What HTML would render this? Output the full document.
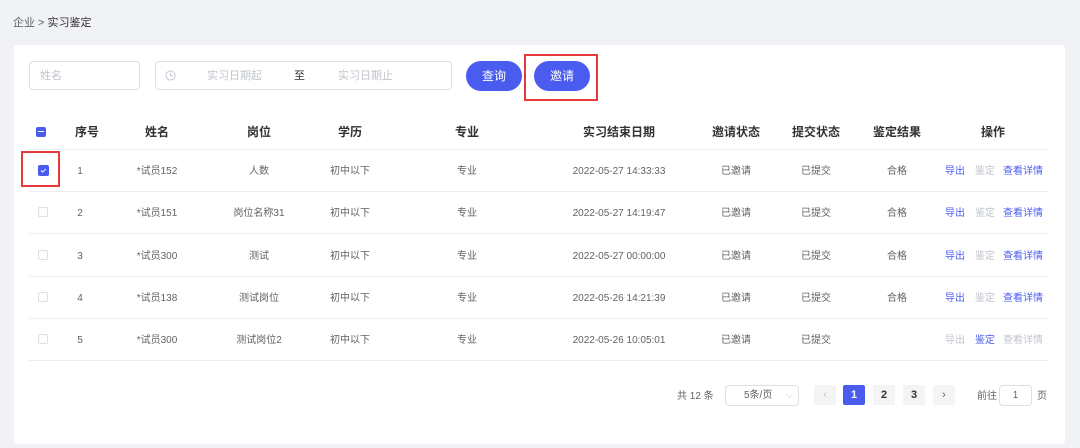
<!DOCTYPE html>
<html><head><meta charset="utf-8"><style>
*{box-sizing:border-box;margin:0;padding:0}
body{width:1080px;height:448px;background:#f0f2f5;font-family:"Liberation Sans","Noto Sans CJK SC",sans-serif;position:relative;overflow:hidden;color:#606266}
.a{position:absolute;line-height:12px}
.card{left:14px;top:45px;width:1051px;height:399px;background:#fff;border-radius:3px}
.inp{border:1px solid #dcdfe6;border-radius:4px;background:#fff}
.ph{color:#c0c4cc;font-size:11px}
.btn{background:#4a5cf0;color:#fff;font-size:12px;border-radius:15px;text-align:center;line-height:30px}
.hd{font-size:12px;font-weight:bold;color:#303133;top:126px;transform:translateX(-50%);white-space:nowrap}
.c{font-size:10px;color:#606266;transform:translate(-50%,2px);white-space:nowrap}
.line{left:29px;width:1019px;height:1px;background:#ebeef5}
.cb{width:10px;height:10px;border:1px solid #dcdfe6;border-radius:2px;background:#fff}
.blue{color:#4a5cf0}.gray{color:#c0c4cc}
.pg{width:22px;height:20px;background:#f4f4f5;border-radius:2px;font-size:11px;font-weight:bold;color:#303133;text-align:center;line-height:20px;top:385px}
</style></head><body>
<div class="a" style="left:13px;top:17px;font-size:11px;color:#606266">企业 &gt; <span style="color:#303133">实习鉴定</span></div>
<div class="a card"></div>
<div class="a inp" style="left:29px;top:61px;width:111px;height:29px"><span class="a ph" style="left:10px;top:8px">姓名</span></div>
<div class="a inp" style="left:155px;top:61px;width:297px;height:29px">
<svg class="a" style="left:9px;top:8px" width="11" height="11" viewBox="0 0 12 12"><circle cx="6" cy="6" r="5" fill="none" stroke="#c0c4cc" stroke-width="1"/><path d="M6 3v3h2.5" fill="none" stroke="#c0c4cc"/></svg>
<span class="a ph" style="left:51px;top:8px">实习日期起</span>
<span class="a" style="left:138px;top:8px;font-size:11px;color:#303133">至</span>
<span class="a ph" style="left:182px;top:8px">实习日期止</span></div>
<div class="a btn" style="left:466px;top:61px;width:56px;height:30px;line-height:30px">查询</div>
<div class="a btn" style="left:534px;top:61px;width:56px;height:30px;line-height:30px">邀请</div>
<div class="a" style="left:524px;top:54px;width:74px;height:47px;border:2px solid #e83a3a"></div>

<div class="a" style="left:36px;top:127px;width:10px;height:10px;background:#4a5cf0;border-radius:2px"><div class="a" style="left:2px;top:4px;width:6px;height:1px;background:#fff"></div></div>
<div class="a hd" style="left:87px">序号</div>
<div class="a hd" style="left:157px">姓名</div>
<div class="a hd" style="left:259px">岗位</div>
<div class="a hd" style="left:350px">学历</div>
<div class="a hd" style="left:467px">专业</div>
<div class="a hd" style="left:619px">实习结束日期</div>
<div class="a hd" style="left:736px">邀请状态</div>
<div class="a hd" style="left:816px">提交状态</div>
<div class="a hd" style="left:897px">鉴定结果</div>
<div class="a hd" style="left:993px">操作</div>
<div class="a line" style="top:149px"></div>
<div class="a line" style="top:191px"></div>
<div class="a line" style="top:233px"></div>
<div class="a line" style="top:276px"></div>
<div class="a line" style="top:318px"></div>
<div class="a line" style="top:360px"></div>

<div class="a" style="left:38px;top:165px;width:11px;height:11px;background:#4a5cf0;border-radius:2px"><svg class="a" style="left:2px;top:2px" width="7" height="7" viewBox="0 0 7 7"><path d="M1 3.5l1.6 1.6L6 1.8" fill="none" stroke="#fff" stroke-width="1"/></svg></div>
<div class="a" style="left:21px;top:151px;width:39px;height:36px;border:2px solid #e83a3a"></div>
<div class="a cb" style="left:38px;top:207px"></div>
<div class="a cb" style="left:38px;top:250px"></div>
<div class="a cb" style="left:38px;top:292px"></div>
<div class="a cb" style="left:38px;top:334px"></div>

<div class="a c" style="left:80px;top:164px">1</div>
<div class="a c" style="left:157px;top:164px">*试员152</div>
<div class="a c" style="left:259px;top:164px">人数</div>
<div class="a c" style="left:350px;top:164px">初中以下</div>
<div class="a c" style="left:467px;top:164px">专业</div>
<div class="a c" style="left:619px;top:164px">2022-05-27 14:33:33</div>
<div class="a c" style="left:736px;top:164px">已邀请</div>
<div class="a c" style="left:816px;top:164px">已提交</div>
<div class="a c" style="left:897px;top:164px">合格</div>
<div class="a c blue" style="left:955px;top:164px">导出</div><div class="a c gray" style="left:985px;top:164px">鉴定</div><div class="a c blue" style="left:1023px;top:164px">查看详情</div>

<div class="a c" style="left:80px;top:206px">2</div>
<div class="a c" style="left:157px;top:206px">*试员151</div>
<div class="a c" style="left:259px;top:206px">岗位名称31</div>
<div class="a c" style="left:350px;top:206px">初中以下</div>
<div class="a c" style="left:467px;top:206px">专业</div>
<div class="a c" style="left:619px;top:206px">2022-05-27 14:19:47</div>
<div class="a c" style="left:736px;top:206px">已邀请</div>
<div class="a c" style="left:816px;top:206px">已提交</div>
<div class="a c" style="left:897px;top:206px">合格</div>
<div class="a c blue" style="left:955px;top:206px">导出</div><div class="a c gray" style="left:985px;top:206px">鉴定</div><div class="a c blue" style="left:1023px;top:206px">查看详情</div>

<div class="a c" style="left:80px;top:249px">3</div>
<div class="a c" style="left:157px;top:249px">*试员300</div>
<div class="a c" style="left:259px;top:249px">测试</div>
<div class="a c" style="left:350px;top:249px">初中以下</div>
<div class="a c" style="left:467px;top:249px">专业</div>
<div class="a c" style="left:619px;top:249px">2022-05-27 00:00:00</div>
<div class="a c" style="left:736px;top:249px">已邀请</div>
<div class="a c" style="left:816px;top:249px">已提交</div>
<div class="a c" style="left:897px;top:249px">合格</div>
<div class="a c blue" style="left:955px;top:249px">导出</div><div class="a c gray" style="left:985px;top:249px">鉴定</div><div class="a c blue" style="left:1023px;top:249px">查看详情</div>

<div class="a c" style="left:80px;top:291px">4</div>
<div class="a c" style="left:157px;top:291px">*试员138</div>
<div class="a c" style="left:259px;top:291px">测试岗位</div>
<div class="a c" style="left:350px;top:291px">初中以下</div>
<div class="a c" style="left:467px;top:291px">专业</div>
<div class="a c" style="left:619px;top:291px">2022-05-26 14:21:39</div>
<div class="a c" style="left:736px;top:291px">已邀请</div>
<div class="a c" style="left:816px;top:291px">已提交</div>
<div class="a c" style="left:897px;top:291px">合格</div>
<div class="a c blue" style="left:955px;top:291px">导出</div><div class="a c gray" style="left:985px;top:291px">鉴定</div><div class="a c blue" style="left:1023px;top:291px">查看详情</div>

<div class="a c" style="left:80px;top:333px">5</div>
<div class="a c" style="left:157px;top:333px">*试员300</div>
<div class="a c" style="left:259px;top:333px">测试岗位2</div>
<div class="a c" style="left:350px;top:333px">初中以下</div>
<div class="a c" style="left:467px;top:333px">专业</div>
<div class="a c" style="left:619px;top:333px">2022-05-26 10:05:01</div>
<div class="a c" style="left:736px;top:333px">已邀请</div>
<div class="a c" style="left:816px;top:333px">已提交</div>
<div class="a c gray" style="left:955px;top:333px">导出</div><div class="a c blue" style="left:985px;top:333px">鉴定</div><div class="a c gray" style="left:1023px;top:333px">查看详情</div>

<div class="a" style="left:677px;top:391px;font-size:10px;color:#606266">共 12 条</div>
<div class="a inp" style="left:725px;top:385px;width:74px;height:21px"><span class="a" style="left:18px;top:4px;font-size:10px">5条/页</span><span class="a" style="left:60px;top:3px;font-size:9px;color:#c0c4cc">⌵</span></div>
<div class="a pg" style="left:814px;color:#c0c4cc;font-weight:normal;line-height:20px">‹</div>
<div class="a pg" style="left:843px;background:#4a5cf0;color:#fff;line-height:20px">1</div>
<div class="a pg" style="left:873px;line-height:20px">2</div>
<div class="a pg" style="left:903px;line-height:20px">3</div>
<div class="a pg" style="left:933px;font-weight:normal;color:#606266;line-height:20px">›</div>
<div class="a" style="left:977px;top:391px;font-size:10px">前往</div>
<div class="a inp" style="left:999px;top:385px;width:33px;height:21px;text-align:center;font-size:10px;line-height:19px">1</div>
<div class="a" style="left:1037px;top:391px;font-size:10px">页</div>
</body></html>
